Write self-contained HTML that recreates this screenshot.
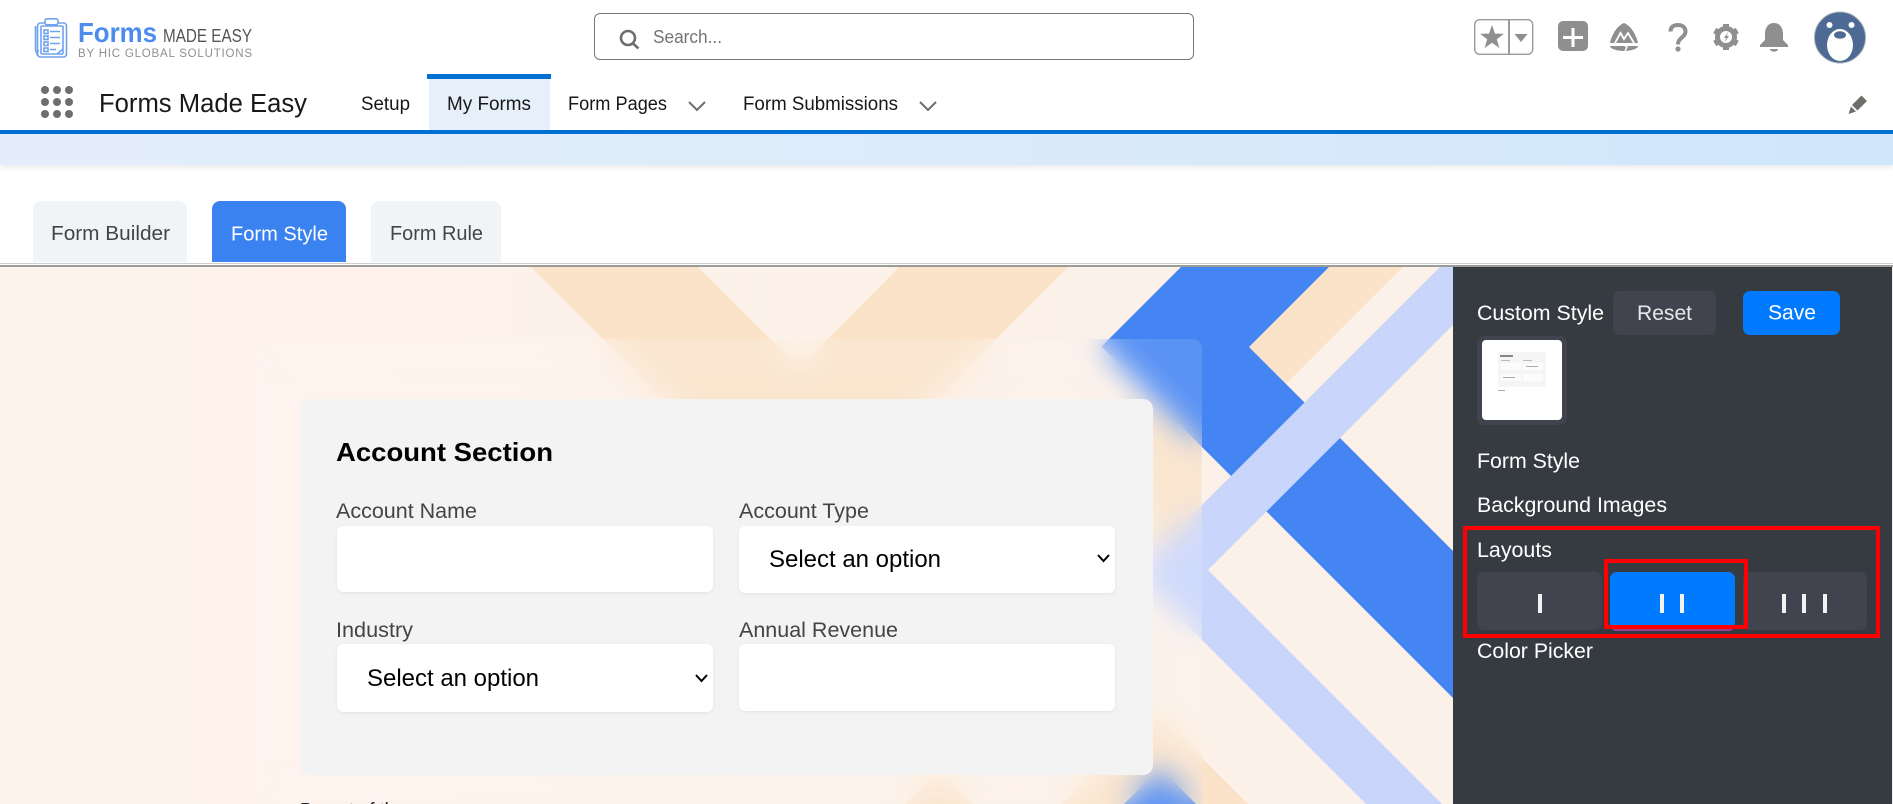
<!DOCTYPE html>
<html lang="en">
<head>
<meta charset="utf-8">
<title>Forms Made Easy</title>
<style>
html,body{margin:0;padding:0;width:1893px;height:804px;overflow:hidden;background:#fff;font-family:"Liberation Sans",sans-serif}
#p{position:relative;width:1893px;height:804px;overflow:hidden}
.a{position:absolute;box-sizing:border-box}
svg{position:absolute;left:0;top:0}
svg text{font-family:"Liberation Sans",sans-serif}
.f{background:#fff;border-radius:6px;box-shadow:0 1px 3px rgba(0,0,0,.07)}
.b{background:#41444f;border-radius:7px}
</style>
</head>
<body>
<div id="p">
<!-- page header band -->
<div class="a" style="left:0;top:134px;width:1893px;height:31px;background:linear-gradient(90deg,#e4eefa 0%,#dcebfa 50%,#cfe6fb 100%);box-shadow:0 2px 6px rgba(0,0,0,.1)"></div>
<div class="a" style="left:429px;top:79px;width:121px;height:51px;background:#e6f0fa"></div>
<div class="a" style="left:427px;top:74px;width:124px;height:5px;background:#0070d2"></div>
<div class="a" style="left:0;top:130px;width:1893px;height:4px;background:#0070d2"></div>
<div class="a" style="left:594px;top:13px;width:600px;height:47px;border:1px solid #777;border-radius:6px;background:#fff"></div>
<!-- tabs -->
<div class="a" style="left:33px;top:201px;width:154px;height:61px;background:#f1f4f7;border-radius:8px 8px 0 0"></div>
<div class="a" style="left:212px;top:201px;width:134px;height:61px;background:#3b82f1;border-radius:8px 8px 0 0"></div>
<div class="a" style="left:371px;top:201px;width:130px;height:61px;background:#f1f4f7;border-radius:8px 8px 0 0"></div>
<div class="a" style="left:0;top:263px;width:1893px;height:1px;background:#cfcfcf"></div>
<div class="a" style="left:0;top:265px;width:1893px;height:2px;background:#9b9b98"></div>
<!-- patterned background -->
<svg width="1893" height="804" viewBox="0 0 1893 804">
<defs><linearGradient id="g" x1="0" x2="1" y1="0" y2="0"><stop offset="0" stop-color="#fef2ec"/><stop offset="1" stop-color="#fcf1e8"/></linearGradient></defs>
<rect x="0" y="267" width="1453" height="537" fill="url(#g)"/>
<polygon points="531,267 799.5,536 1068,267 899,267 799,368 698,267" fill="#fae3c9"/>
<polygon points="1329,267 1249,347 1286,384 1403,267" fill="#fae3c9"/>
<polygon points="1155,711 1254,810 1056,810" fill="#fae3c9"/>
<polygon points="939,770 985,816 893,816" fill="#fae3c9"/>
<polygon points="1120,400 1201,430 1201,540 1150,545" fill="#fae3c9"/>
<polygon points="1181,267 1101.5,346.5 1453,698 1453,551 1249,347 1329,267" fill="#4484f3"/>
<polygon points="1160,768 1215,823 1105,823" fill="#4484f3"/>
<polygon points="1440,267 1134.5,572.5 1370,808 1446,808 1208,570 1511,267" fill="#c9d5fb"/>
</svg>
<!-- glass card -->
<div class="a" style="left:251px;top:339px;width:951px;height:480px;border-radius:10px;background:rgba(255,255,255,.12);-webkit-backdrop-filter:blur(15px);backdrop-filter:blur(15px)"></div>
<!-- form section -->
<div class="a" style="left:300px;top:399px;width:853px;height:376px;border-radius:10px;background:#f3f3f3"></div>
<div class="a f" style="left:337px;top:526px;width:376px;height:66px"></div>
<div class="a f" style="left:739px;top:526px;width:376px;height:67px"></div>
<div class="a f" style="left:337px;top:644px;width:376px;height:68px"></div>
<div class="a f" style="left:739px;top:644px;width:376px;height:67px"></div>
<!-- sidebar -->
<div class="a" style="left:1453px;top:267px;width:439px;height:537px;background:#363a41"></div>
<div class="a" style="left:1892px;top:267px;width:1px;height:537px;background:#eee"></div>
<div class="a b" style="left:1613px;top:291px;width:103px;height:44px"></div>
<div class="a" style="left:1743px;top:291px;width:97px;height:44px;background:#007bff;border-radius:7px"></div>
<div class="a" style="left:1477px;top:336px;width:90px;height:89px;background:#41444f;border-radius:7px"></div>
<div class="a" style="left:1482px;top:340px;width:80px;height:80px;background:#fff;border-radius:4px"></div>
<div class="a" style="left:1498px;top:352px;width:48px;height:35px;background:#f5f5f5;border-radius:2px"></div>
<div class="a" style="left:1500px;top:355px;width:13px;height:2px;background:#888"></div>
<div class="a" style="left:1501px;top:360px;width:9px;height:1px;background:#bbb"></div>
<div class="a" style="left:1523px;top:360px;width:9px;height:1px;background:#bbb"></div>
<div class="a" style="left:1501px;top:363px;width:20px;height:7px;background:#fcfcfc"></div>
<div class="a" style="left:1523px;top:363px;width:20px;height:7px;background:#fcfcfc"></div>
<div class="a" style="left:1526px;top:366px;width:12px;height:1px;background:#aaa"></div>
<div class="a" style="left:1501px;top:374px;width:20px;height:7px;background:#fcfcfc"></div>
<div class="a" style="left:1523px;top:374px;width:20px;height:7px;background:#fcfcfc"></div>
<div class="a" style="left:1503px;top:377px;width:12px;height:1px;background:#aaa"></div>
<div class="a" style="left:1498px;top:390px;width:7px;height:1px;background:#aaa"></div>
<div class="a b" style="left:1477px;top:572px;width:125px;height:58px"></div>
<div class="a b" style="left:1743px;top:572px;width:124px;height:58px"></div>
<div class="a" style="left:1610px;top:572px;width:125px;height:59px;background:#a0408c;border-radius:7px"></div>
<div class="a" style="left:1610px;top:572px;width:125px;height:56px;background:#007bff;border-radius:7px 7px 0 0"></div>
<div class="a" style="left:1538px;top:594px;width:4px;height:19px;background:#f2f2f2"></div>
<div class="a" style="left:1660px;top:594px;width:4px;height:19px;background:#f2f2f2"></div>
<div class="a" style="left:1680px;top:594px;width:4px;height:19px;background:#f2f2f2"></div>
<div class="a" style="left:1782px;top:594px;width:4px;height:19px;background:#f2f2f2"></div>
<div class="a" style="left:1802px;top:594px;width:4px;height:19px;background:#f2f2f2"></div>
<div class="a" style="left:1823px;top:594px;width:4px;height:19px;background:#f2f2f2"></div>
<div class="a" style="left:1463px;top:526px;width:417px;height:112px;border:4px solid #f00"></div>
<div class="a" style="left:1604px;top:559px;width:144px;height:70px;border:4px solid #f00"></div>

<!-- text and icons -->
<svg width="1893" height="804" viewBox="0 0 1893 804">
<!-- logo -->
<g fill="none" stroke="#6ea2ee" stroke-width="1.6">
<rect x="37.5" y="23" width="29" height="34" rx="3"/>
<rect x="41" y="26" width="22" height="28" rx="1"/>
<rect x="45" y="18.8" width="13" height="6" rx="2" fill="#fff"/>
<path d="M35.5 26v24l1.5 4 1.5-4"/>
<rect x="44" y="30" width="4" height="3.5"/><rect x="44" y="36" width="4" height="3.5"/><rect x="44" y="42" width="4" height="3.5"/><rect x="44" y="48" width="4" height="3.5"/>
<path d="M50 31.5h10M50 37.5h10M50 43.5h10M50 49.5h6M57 54l6-5"/>
</g>
<text x="78" y="42" font-size="28" font-weight="700" fill="#4d8bef" textLength="79" lengthAdjust="spacingAndGlyphs">Forms</text>
<text x="163" y="42" font-size="18" fill="#555" textLength="89" lengthAdjust="spacingAndGlyphs">MADE EASY</text>
<text x="78" y="57" font-size="11.5" fill="#8f8f8f" textLength="174" lengthAdjust="spacing">BY HIC GLOBAL SOLUTIONS</text>
<!-- search -->
<g fill="none" stroke="#706e6b" stroke-width="2.6"><circle cx="628" cy="38" r="7"/><path d="M633 43.5l5.500 5"/></g>
<text x="653" y="43" font-size="18" fill="#747474" textLength="69" lengthAdjust="spacingAndGlyphs">Search...</text>
<!-- header icons -->
<rect x="1474.7" y="19.7" width="58" height="34.6" rx="5" fill="#fff" stroke="#9a9a9a" stroke-width="1.4"/>
<rect x="1508" y="20" width="2" height="34" fill="#9a9a9a"/>
<polygon points="1492,25 1495,33.6 1504,33.8 1496.8,39.2 1499.4,48 1492,42.8 1484.6,48 1487.2,39.2 1480,33.8 1489,33.6" fill="#8f8f8f"/>
<polygon points="1514.5,34 1527.5,34 1521,42" fill="#8f8f8f"/>
<rect x="1558" y="21" width="30" height="30" rx="5" fill="#8f8f8f"/>
<path d="M1563 37.5h20M1573 28v19" stroke="#fff" stroke-width="3" fill="none"/>
<path d="M1624 23C1631 26 1636 34 1638 43L1610 43C1612 34 1617 26 1624 23Z M1610 46L1638 46C1638 49 1630 51 1624 51C1618 51 1610 49 1610 46Z" fill="#8f8f8f"/>
<path d="M1615 43L1620.500 33L1624 39L1628 33L1634 43" fill="none" stroke="#fff" stroke-width="1.800"/>
<path d="M1622 44l5 3-2 4" fill="none" stroke="#fff" stroke-width="1.400"/>
<path d="M1670.500 31.500c0-5 3.500-6.500 7.500-6.500 5 0 7.500 3 7.500 6.500 0 6-7.500 6-7.500 13" fill="none" stroke="#8f8f8f" stroke-width="4"/>
<circle cx="1678" cy="49" r="2.600" fill="#8f8f8f"/>
<g stroke="#8f8f8f" fill="none">
<circle cx="1726" cy="37" r="8.500" stroke-width="5"/>
<g stroke-width="6"><path d="M1726 24v4M1726 46v4"/><path d="M1714.700 30.500l3.500 2M1733.800 41.500l3.500 2"/><path d="M1714.700 43.500l3.500-2M1733.800 32.500l3.500-2"/></g>
</g>
<polygon points="1728,32 1724,38 1726.300,38 1724.500,42.500 1729,36 1726.700,36" fill="#8f8f8f"/>
<path d="M1774 23c-6 0-9 5-9 11v6l-5 5v2h28v-2l-5-5v-6c0-6-3-11-9-11z M1770 49h8c0 3.500-8 3.500-8 0z" fill="#8f8f8f"/>
<circle cx="1840" cy="37.500" r="25.500" fill="#4d6a94" stroke="#a9afb8" stroke-width="1"/>
<circle cx="1829.500" cy="25" r="3" fill="#fff"/><circle cx="1851.500" cy="25" r="3" fill="#fff"/>
<ellipse cx="1840" cy="45" rx="13" ry="16" fill="#fff"/>
<ellipse cx="1840" cy="35" rx="6" ry="3.800" fill="#4d6a94"/>
<path d="M1852 105L1861.500 95.500l5.500 5.500L1857.500 110.500z M1851 106.500l5 5-7.500 2.500z" fill="#706e6b"/>
<!-- nav -->
<g fill="#706e6b"><circle cx="45" cy="90" r="4"/><circle cx="57" cy="90" r="4"/><circle cx="69" cy="90" r="4"/><circle cx="45" cy="102" r="4"/><circle cx="57" cy="102" r="4"/><circle cx="69" cy="102" r="4"/><circle cx="45" cy="114" r="4"/><circle cx="57" cy="114" r="4"/><circle cx="69" cy="114" r="4"/></g>
<g fill="#181818">
<text x="99" y="112" font-size="25.500" textLength="208" lengthAdjust="spacingAndGlyphs">Forms Made Easy</text>
<text x="361" y="110" font-size="19" textLength="49" lengthAdjust="spacingAndGlyphs">Setup</text>
<text x="447" y="110" font-size="19" textLength="84" lengthAdjust="spacingAndGlyphs">My Forms</text>
<text x="568" y="110" font-size="19" textLength="99" lengthAdjust="spacingAndGlyphs">Form Pages</text>
<text x="743" y="110" font-size="19" textLength="155" lengthAdjust="spacingAndGlyphs">Form Submissions</text>
</g>
<path d="M689 102l8 8 8-8M920 102l8 8 8-8" fill="none" stroke="#706e6b" stroke-width="2"/>
<!-- tabs -->
<text x="51" y="240" font-size="20" fill="#444" textLength="119" lengthAdjust="spacingAndGlyphs">Form Builder</text>
<text x="231" y="240.500" font-size="20" fill="#fff" textLength="97" lengthAdjust="spacingAndGlyphs">Form Style</text>
<text x="390" y="240" font-size="20" fill="#444" textLength="93" lengthAdjust="spacingAndGlyphs">Form Rule</text>
<!-- form -->
<text x="336" y="461" font-size="26" font-weight="700" fill="#000" textLength="217" lengthAdjust="spacingAndGlyphs">Account Section</text>
<g fill="#444" font-size="21">
<text x="336" y="518" textLength="141" lengthAdjust="spacingAndGlyphs">Account Name</text>
<text x="739" y="518" textLength="130" lengthAdjust="spacingAndGlyphs">Account Type</text>
<text x="336" y="637" textLength="77" lengthAdjust="spacingAndGlyphs">Industry</text>
<text x="739" y="637" textLength="159" lengthAdjust="spacingAndGlyphs">Annual Revenue</text>
</g>
<g fill="#000" font-size="24">
<text x="769" y="567" textLength="172" lengthAdjust="spacingAndGlyphs">Select an option</text>
<text x="367" y="686" textLength="172" lengthAdjust="spacingAndGlyphs">Select an option</text>
</g>
<path d="M1098 555l5.500 6 5.500-6M696 675l5.500 6 5.500-6" fill="none" stroke="#000" stroke-width="2"/>
<text x="300" y="817" font-size="20" fill="#222" textLength="105" lengthAdjust="spacingAndGlyphs">Parent of the</text>
<!-- sidebar text -->
<g fill="#fff" font-size="21">
<text x="1477" y="320" textLength="127" lengthAdjust="spacingAndGlyphs">Custom Style</text>
<text x="1637" y="320" fill="#e8e8e8" textLength="55" lengthAdjust="spacingAndGlyphs">Reset</text>
<text x="1768" y="319.500" textLength="48" lengthAdjust="spacingAndGlyphs">Save</text>
<text x="1477" y="468" textLength="103" lengthAdjust="spacingAndGlyphs">Form Style</text>
<text x="1477" y="512" textLength="190" lengthAdjust="spacingAndGlyphs">Background Images</text>
<text x="1477" y="557" textLength="75" lengthAdjust="spacingAndGlyphs">Layouts</text>
<text x="1477" y="658" textLength="116" lengthAdjust="spacingAndGlyphs">Color Picker</text>
</g>
</svg>
</div>
</body>
</html>
